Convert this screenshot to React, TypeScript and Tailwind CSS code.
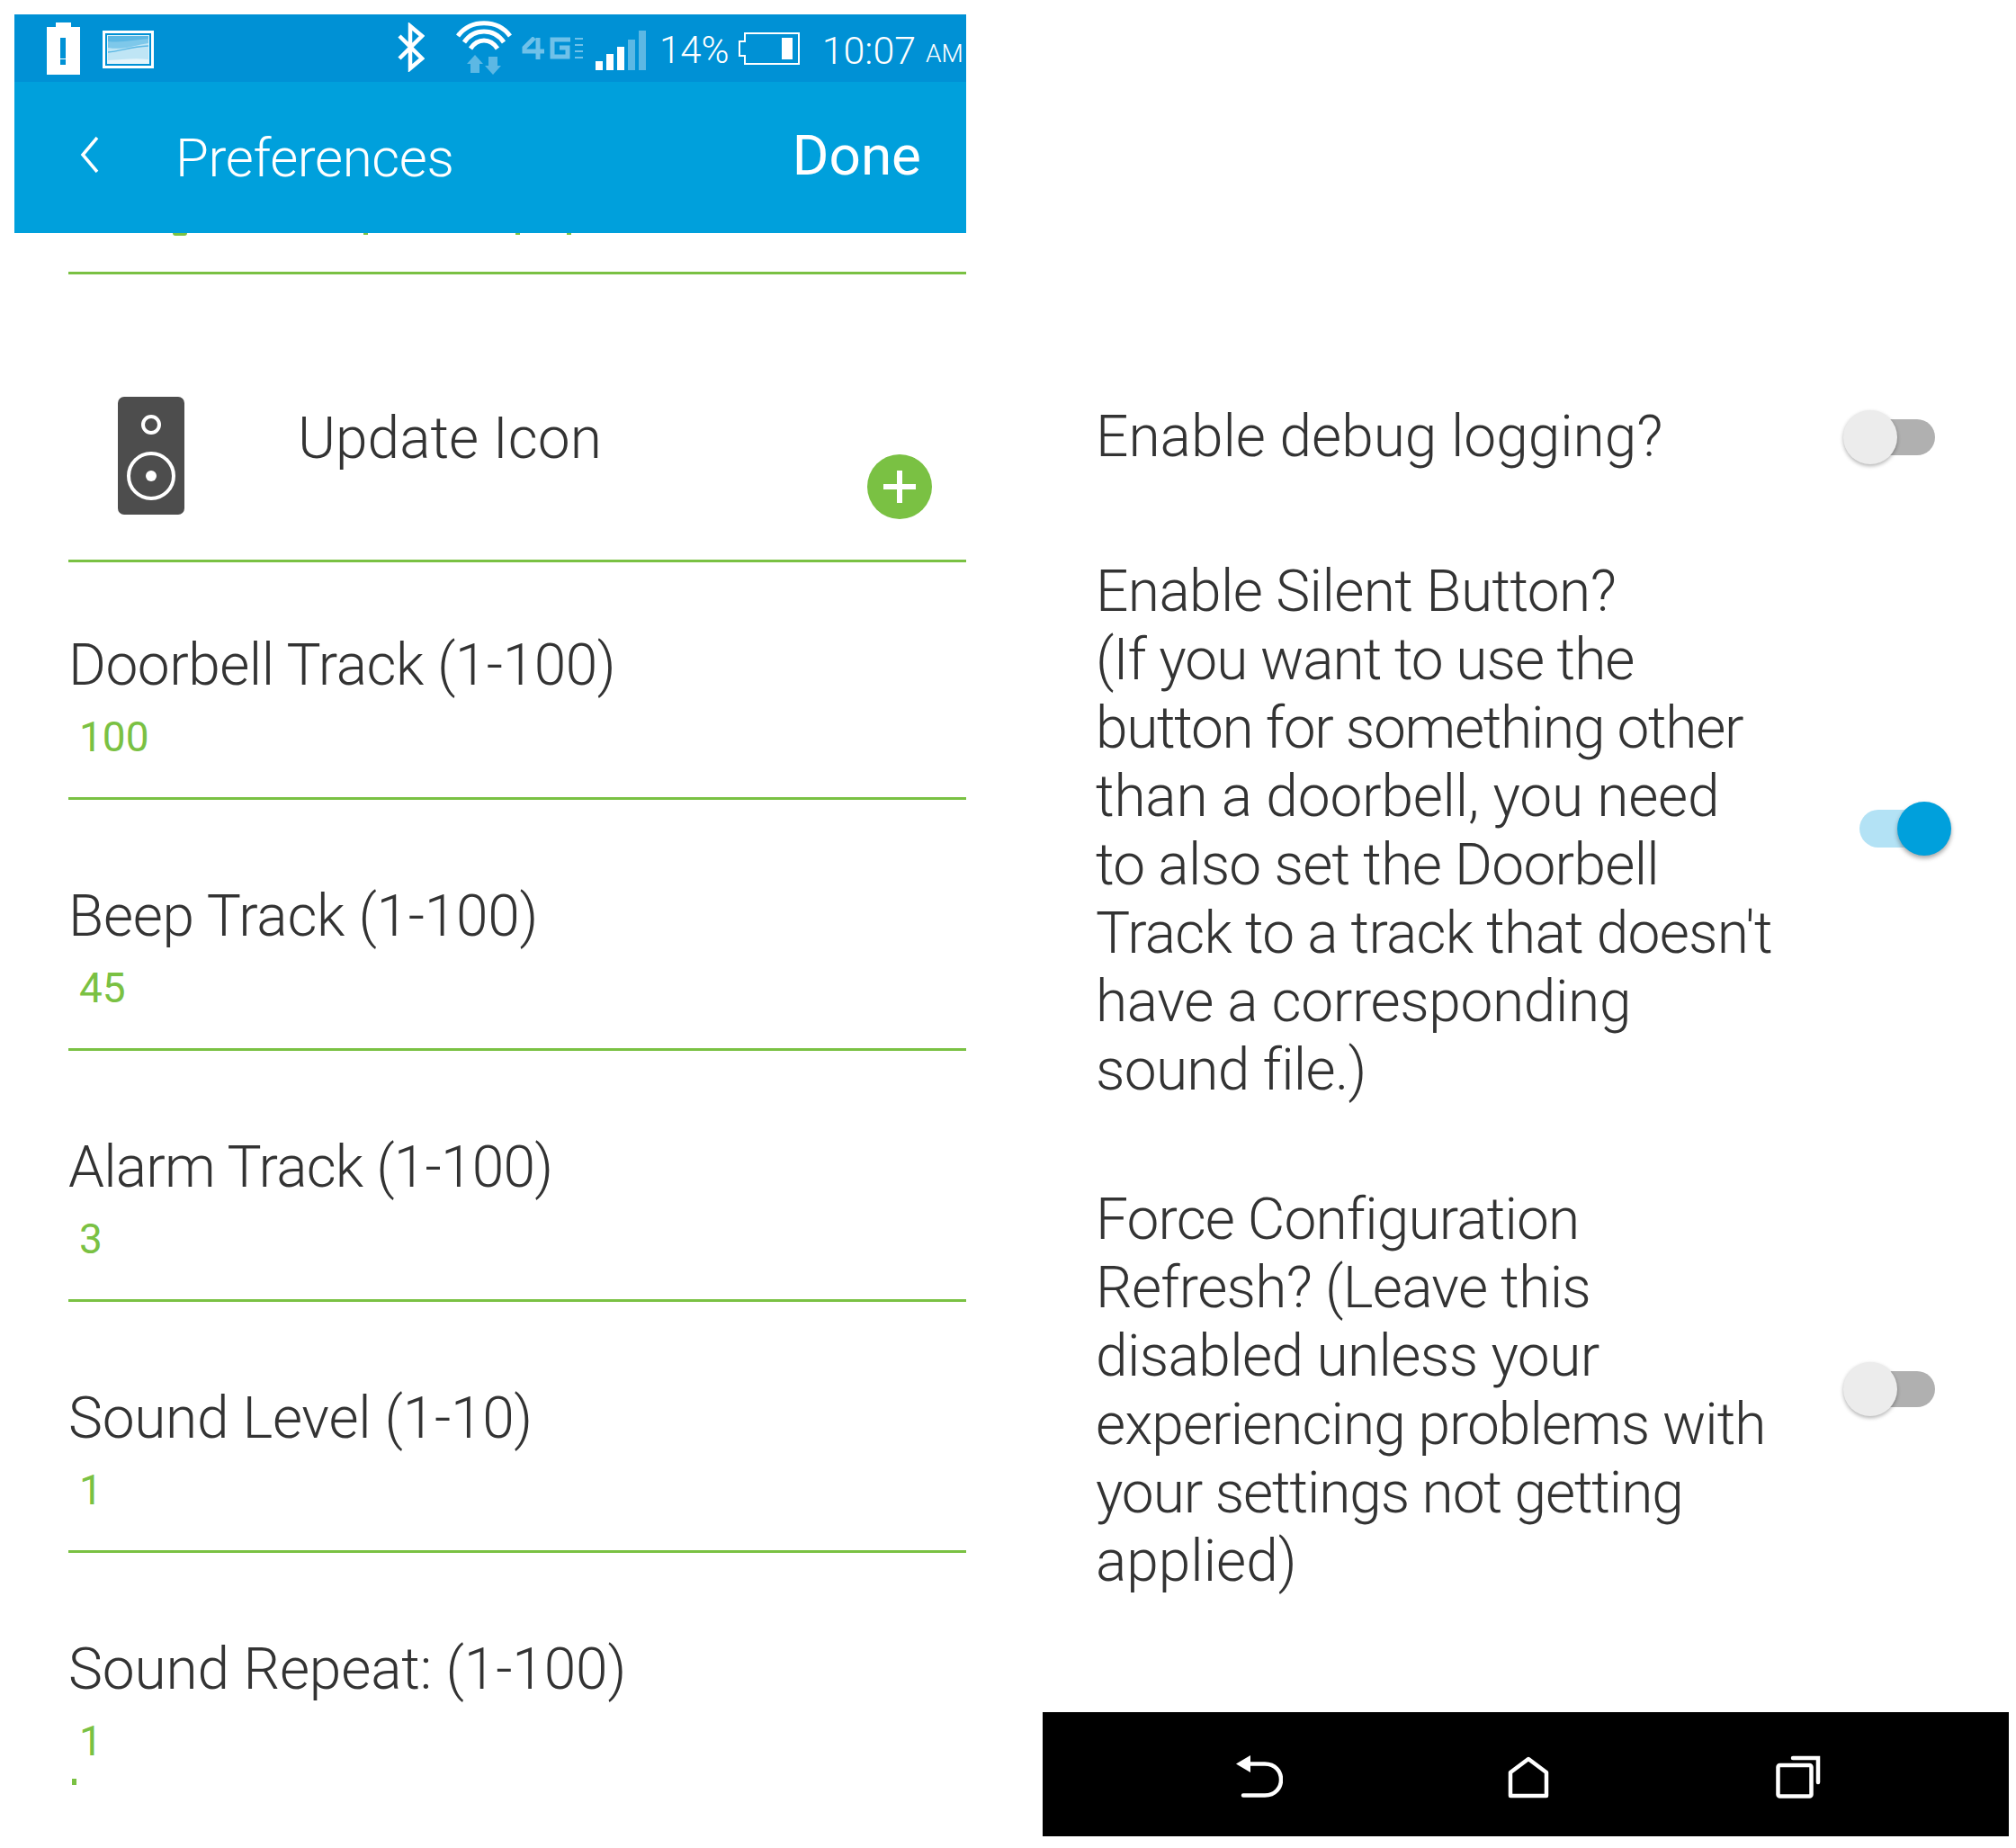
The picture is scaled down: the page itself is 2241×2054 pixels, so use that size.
const sans = "font-['Roboto',sans-serif]";

const tracks = [
  { label: "Doorbell Track (1-100)", value: "100", pad: "pt-[77px]", fit: "tracking-[-0.5px]" },
  { label: "Beep Track (1-100)", value: "45", pad: "pt-[92px]", fit: "tracking-[-0.3px]" },
  { label: "Alarm Track (1-100)", value: "3", pad: "pt-[92px]", fit: "tracking-[-0.8px]" },
  { label: "Sound Level (1-10)", value: "1", pad: "pt-[92px]", fit: "tracking-[-0.3px]" },
];

const silentLines = [
  { text: "Enable Silent Button?", fit: "tracking-[-0.6px]" },
  { text: "(If you want to use the", fit: "tracking-[-1px]" },
  { text: "button for something other", fit: "tracking-[-1.3px]" },
  { text: "than a doorbell, you need", fit: "tracking-[-0.2px]" },
  { text: "to also set the Doorbell", fit: "tracking-[-0.7px]" },
  { text: "Track to a track that doesn't", fit: "tracking-[-0.75px]" },
  { text: "have a corresponding", fit: "tracking-[-0.35px]" },
  { text: "sound file.)", fit: "tracking-[-0.7px]" },
];

const refreshLines = [
  { text: "Force Configuration", fit: "tracking-[-0.85px]" },
  { text: "Refresh? (Leave this", fit: "tracking-[-0.7px]" },
  { text: "disabled unless your", fit: "tracking-[-0.6px]" },
  { text: "experiencing problems with", fit: "tracking-[-0.95px]" },
  { text: "your settings not getting", fit: "tracking-[-1.1px]" },
  { text: "applied)", fit: "" },
];

const BatteryAlert = () => (
  <svg width="37" height="58" viewBox="0 0 37 58">
    <path d="M10 0h17v5h10v53H0V5h10z" fill="#fff" />
    <rect x="15" y="17" width="6" height="23" fill="#0091d5" />
    <rect x="15" y="41" width="6" height="6" fill="#0091d5" />
  </svg>
);

const PictureIcon = () => (
  <svg width="57" height="42" viewBox="0 0 57 42" className="ml-[25px] mt-[9px]">
    <rect width="57" height="42" fill="#fff" />
    <rect x="4" y="4" width="49" height="34" fill="#e3f4fb" stroke="#0091d5" strokeWidth="2" />
    <path d="M6 6h45v26c-14-2-30 0-45 1z" fill="#bfe5f5" />
    <path d="M6 6h45v8c-14 2-28 8-45 5z" fill="#7ec8ea" />
    <path d="M6 6h45v3c-14 1-30 5-45 3z" fill="#5cb8e4" />
    <path d="M6 24c14-1 24-6 45-7" fill="none" stroke="#5cb8e4" strokeWidth="1.5" />
  </svg>
);

const Bluetooth = () => (
  <svg width="30" height="55" viewBox="0 0 30 55" fill="none" stroke="#fff" strokeWidth="4.5">
    <path d="M2 15l25 25-13 11V4l13 11L2 40" />
  </svg>
);

const Wifi = () => (
  <svg width="62" height="61" viewBox="0 0 62 61">
    <g fill="none" stroke="#fff" strokeWidth="5">
      <path d="M2 17C16 -2 46 -2 60 17" />
      <path d="M9 24C20 8 42 8 53 24" />
      <path d="M16 31C24 19 38 19 46 31" />
    </g>
    <path d="M21 38l9 10h-4v10H16V48h-4z" fill="#5cb8e4" />
    <path d="M41 60L32 50h4V40h10v10h4z" fill="#5cb8e4" />
  </svg>
);

const FourG = () => (
  <svg width="68" height="25" viewBox="0 0 68 25" fill="none" stroke="#6fc1e9" strokeWidth="5">
    <path d="M14 1L3 12v4h22M18 1v24" />
    <path d="M54 3H34v19h17V12H42" />
    <path d="M59 2h9M59 9h9M59 16h9M59 23h9" strokeWidth="2" />
  </svg>
);

const Signal = () => (
  <svg width="56" height="44" viewBox="0 0 56 44">
    <rect x="0" y="34" width="8" height="10" fill="#fff" />
    <rect x="12" y="26" width="8" height="18" fill="#fff" />
    <rect x="24" y="18" width="8" height="26" fill="#fff" />
    <rect x="36" y="10" width="8" height="34" fill="#5cb8e4" />
    <rect x="48" y="0" width="8" height="44" fill="#5cb8e4" />
  </svg>
);

const BatteryOutline = () => (
  <svg width="68" height="36" viewBox="0 0 68 36" fill="none" stroke="#fff" strokeWidth="2">
    <path d="M7 1h60v34H7v-9H1V10h6z" />
    <rect x="48" y="6" width="12" height="24" fill="#fff" stroke="none" />
  </svg>
);

const Speaker = () => (
  <svg width="74" height="131" viewBox="0 0 74 131">
    <rect width="74" height="131" rx="7" fill="#4d4d4d" />
    <circle cx="37" cy="31" r="9" fill="none" stroke="#fff" strokeWidth="4" />
    <circle cx="37" cy="88" r="25" fill="none" stroke="#fff" strokeWidth="4" />
    <circle cx="37" cy="88" r="6" fill="#fff" />
  </svg>
);

const Toggle = ({ on }: { on: boolean }) =>
  on ? (
    <div className="flex items-center w-[102px] h-[60px] relative">
      <div className="w-[70px] h-[42px] rounded-full bg-[#b3e2f5]" />
      <div className="absolute right-0 top-0 w-[60px] h-[60px] rounded-full bg-[#00a0dc] shadow-[0_3px_5px_rgba(0,0,0,0.35)]" />
    </div>
  ) : (
    <div className="flex items-center justify-end w-[102px] h-[60px] relative">
      <div className="w-[70px] h-[40px] rounded-full bg-[#b0b0b0]" />
      <div className="absolute left-0 top-0 w-[60px] h-[60px] rounded-full bg-[#ececec] shadow-[0_2px_4px_rgba(0,0,0,0.3)]" />
    </div>
  );

const App = () => {
  return (
    <div className={`w-[2241px] h-[2054px] bg-white flex items-start text-[#333] font-light ${sans}`}>
      {/* left phone */}
      <div className="w-[1058px] ml-[16px] mt-[16px] shrink-0">
        <div className="bg-[#00a0dc] h-[243px]">
          <div className="h-[75px] bg-[#0091d5] flex items-start pl-[36px] pt-[9px] text-white">
            <BatteryAlert />
            <PictureIcon />
            <div className="ml-[271px] mt-[0px]"><Bluetooth /></div>
            <div className="ml-[35px] -mt-[2px]"><Wifi /></div>
            <div className="ml-[11px] mt-[16px]"><FourG /></div>
            <div className="ml-[14px] mt-[9px]"><Signal /></div>
            <span className="ml-[15px] mt-[6px] text-[42px] leading-[50px]">14%</span>
            <div className="ml-[10px] mt-[11px]"><BatteryOutline /></div>
            <span className="ml-[25px] mt-[6px] text-[43px] leading-[50px]">10:07</span>
            <span className="ml-[11px] mt-[18px] text-[28px] leading-[34px]">AM</span>
          </div>
          <div className="flex items-center h-[168px] text-white pb-[20px]">
            <svg width="22" height="40" viewBox="0 0 22 40" fill="none" stroke="#fff" strokeWidth="3.5" className="ml-[73px] mt-[14px]">
              <path d="M19 1L3 20l16 19" />
            </svg>
            <span className="ml-[84px] text-[60px] mt-[22px] tracking-[-0.4px]">Preferences</span>
            <span className="ml-auto mr-[50px] text-[62px] mt-[14px] font-normal">Done</span>
          </div>
        </div>
        {/* descenders of the row scrolled under the bar */}
        <div className="h-[46px] border-b-[3px] border-[#7ac143] ml-[60px] flex items-start">
          <div className="ml-[116px] w-[16px] h-[3px] rounded-b-full bg-[#7ac143]" />
          <div className="ml-[196px] w-[5px] h-[2px] bg-[#7ac143]" />
          <div className="ml-[164px] w-[5px] h-[2px] bg-[#7ac143]" />
          <div className="ml-[52px] w-[5px] h-[2px] bg-[#7ac143]" />
        </div>
        <div className="h-[320px] border-b-[3px] border-[#7ac143] ml-[60px] flex items-start pt-[136px]">
          <div className="ml-[55px] shrink-0"><Speaker /></div>
          <span className="ml-[126px] mt-[9px] text-[64px] leading-[76px]">Update Icon</span>
          <div className="ml-auto mr-[38px] mt-[64px] w-[72px] h-[72px] rounded-full bg-[#7ac143] flex items-center justify-center">
            <svg width="36" height="36" viewBox="0 0 36 36"><path d="M15 0h6v15h15v6H21v15h-6V21H0v-6h15z" fill="#fff" /></svg>
          </div>
        </div>
        {tracks.map((t) => (
          <div key={t.label} className={`ml-[60px] border-b-[3px] border-[#7ac143] ${t.pad} pb-[39px]`}>
            <div className={`text-[64px] leading-[76px] ${t.fit}`}>{t.label}</div>
            <div className="text-[46px] leading-[56px] mt-[13px] ml-[12px] text-[#7ac143] font-normal">{t.value}</div>
          </div>
        ))}
        <div className="ml-[60px] pt-[92px]">
          <div className="text-[64px] leading-[76px] tracking-[-0.15px]">Sound Repeat: (1-100)</div>
          <div className="text-[46px] leading-[56px] mt-[13px] ml-[12px] text-[#7ac143] font-normal">1</div>
          <div className="w-[5px] h-[7px] ml-[4px] mt-[14px] bg-[#7ac143]" />
        </div>
      </div>

      {/* right phone */}
      <div className="w-[1074px] ml-[85px] shrink-0 h-[2041px] flex flex-col">
        <div className="pt-[448px] pl-[59px] flex items-center">
          <div className="text-[64px] leading-[76px] w-[765px]">Enable debug logging?</div>
          <div className="ml-[66px]"><Toggle on={false} /></div>
        </div>
        <div className="mt-[96px] pl-[59px] flex items-center">
          <div className="text-[64px] leading-[76px] w-[765px] whitespace-nowrap">
            {silentLines.map((l) => (
              <div key={l.text} className={l.fit}>{l.text}</div>
            ))}
          </div>
          <div className="ml-[84px] -mt-[6px]"><Toggle on={true} /></div>
        </div>
        <div className="mt-[90px] pl-[59px] flex items-center">
          <div className="text-[64px] leading-[76px] w-[765px] whitespace-nowrap">
            {refreshLines.map((l) => (
              <div key={l.text} className={l.fit}>{l.text}</div>
            ))}
          </div>
          <div className="ml-[66px] -mt-[5px]"><Toggle on={false} /></div>
        </div>
        <div className="mt-auto h-[138px] bg-black flex items-center pl-[215px] pt-[6px]">
          <svg width="52" height="48" viewBox="0 0 52 48" fill="none" stroke="#fff" strokeWidth="4.5">
            <path d="M16 0v19L0 9.5z" fill="#fff" stroke="none" />
            <path d="M14 9.5h18c24 0 24 35 0 35H8" strokeLinecap="round" />
          </svg>
          <svg width="46" height="48" viewBox="0 0 46 48" fill="none" stroke="#fff" strokeWidth="4.5" className="ml-[250px]">
            <path d="M23 4L3 19v26h40V19z" strokeLinejoin="round" />
          </svg>
          <svg width="50" height="48" viewBox="0 0 50 48" fill="none" stroke="#fff" strokeWidth="4.5" className="ml-[252px]">
            <rect x="2.5" y="11" width="37" height="34.5" rx="2" />
            <path d="M19 3h28v27" strokeLinecap="round" />
          </svg>
        </div>
      </div>
    </div>
  );
};

export default App;
